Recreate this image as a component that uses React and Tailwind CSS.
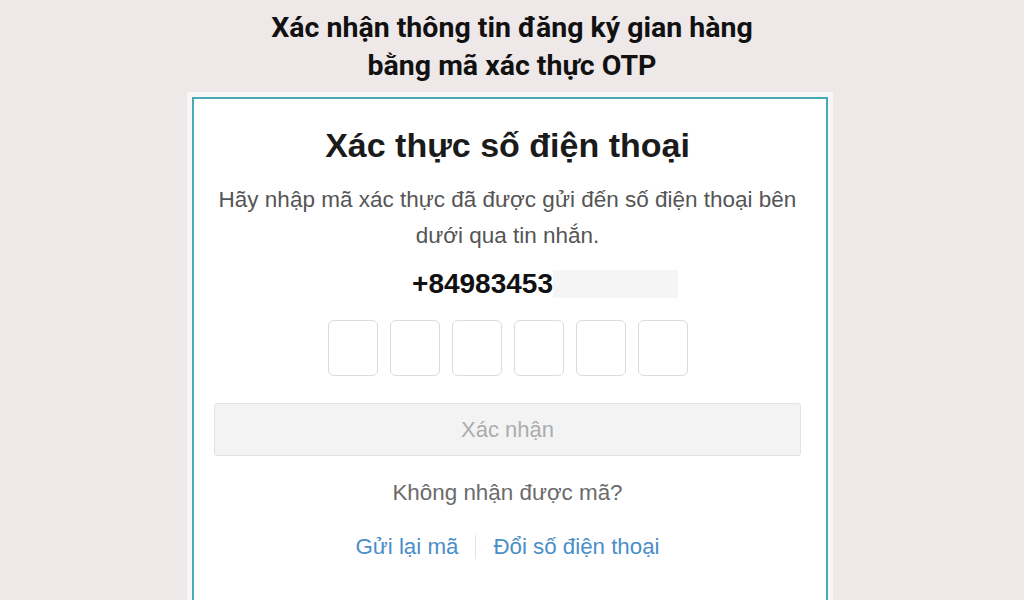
import React, { useState } from 'react'

const OtpVerify = () => {
  const [code, setCode] = useState(['', '', '', '', '', ''])

  const handleChange = (i, v) => {
    const next = [...code]
    next[i] = v.slice(-1)
    setCode(next)
  }

  return (
    <div className="h-[600px] w-full overflow-hidden bg-[#eee8e8] flex flex-col items-center font-['Liberation_Sans',Arial,sans-serif]">
      <h1 className="pt-[9px] text-center text-[28.5px] leading-[38px] font-bold text-[#111] font-['Roboto',sans-serif]">
        Xác nhận thông tin đăng ký gian hàng
        <br />
        bằng mã xác thực OTP
      </h1>

      <div className="mt-[7px] ml-[-4px] p-[5px] bg-[#f8f6f6]">
        <div className="w-[636px] h-[600px] border-2 border-[#47aab4] bg-white pl-5 pr-[25px] pt-[28px] flex flex-col items-center">
          <h2 className="text-[34px] leading-[36px] font-bold text-[#1b1b1b]">Xác thực số điện thoại</h2>

          <p className="mt-[19px] text-center text-[22.5px] leading-[36px] text-[#555] whitespace-nowrap">
            Hãy nhập mã xác thực đã được gửi đến số điện thoại bên
            <br />
            dưới qua tin nhắn.
          </p>

          <div className="mt-[13px] ml-[75px] flex items-center h-[34px]">
            <span className="text-[28px] font-bold text-[#111] leading-[34px]">+84983453</span>
            <span className="w-[125px] h-[28px] bg-[#f5f5f5]"></span>
          </div>

          <div className="mt-[19px] flex gap-3">
            {code.map((c, i) => (
              <input
                key={i}
                value={c}
                onChange={(e) => handleChange(i, e.target.value)}
                className="w-[50px] h-[56px] rounded-md border border-[#dcdcdc] text-center text-xl focus:outline-none"
              />
            ))}
          </div>

          <button className="mt-[27px] w-full h-[53px] bg-[#f3f3f3] border border-[#e2e2e2] rounded-[3px] text-[22px] text-[#acacac]">
            Xác nhận
          </button>

          <div className="mt-[23px] text-[22.4px] leading-[28px] text-[#6b6b6b]">Không nhận được mã?</div>

          <div className="mt-[26px] flex items-center text-[22.3px] leading-[28px] text-[#4a8fc8]">
            <button>Gửi lại mã</button>
            <span className="mx-[17px] w-px h-[24px] bg-[#e4e4e4]"></span>
            <button>Đổi số điện thoại</button>
          </div>
        </div>
      </div>
    </div>
  )
}

export default OtpVerify
